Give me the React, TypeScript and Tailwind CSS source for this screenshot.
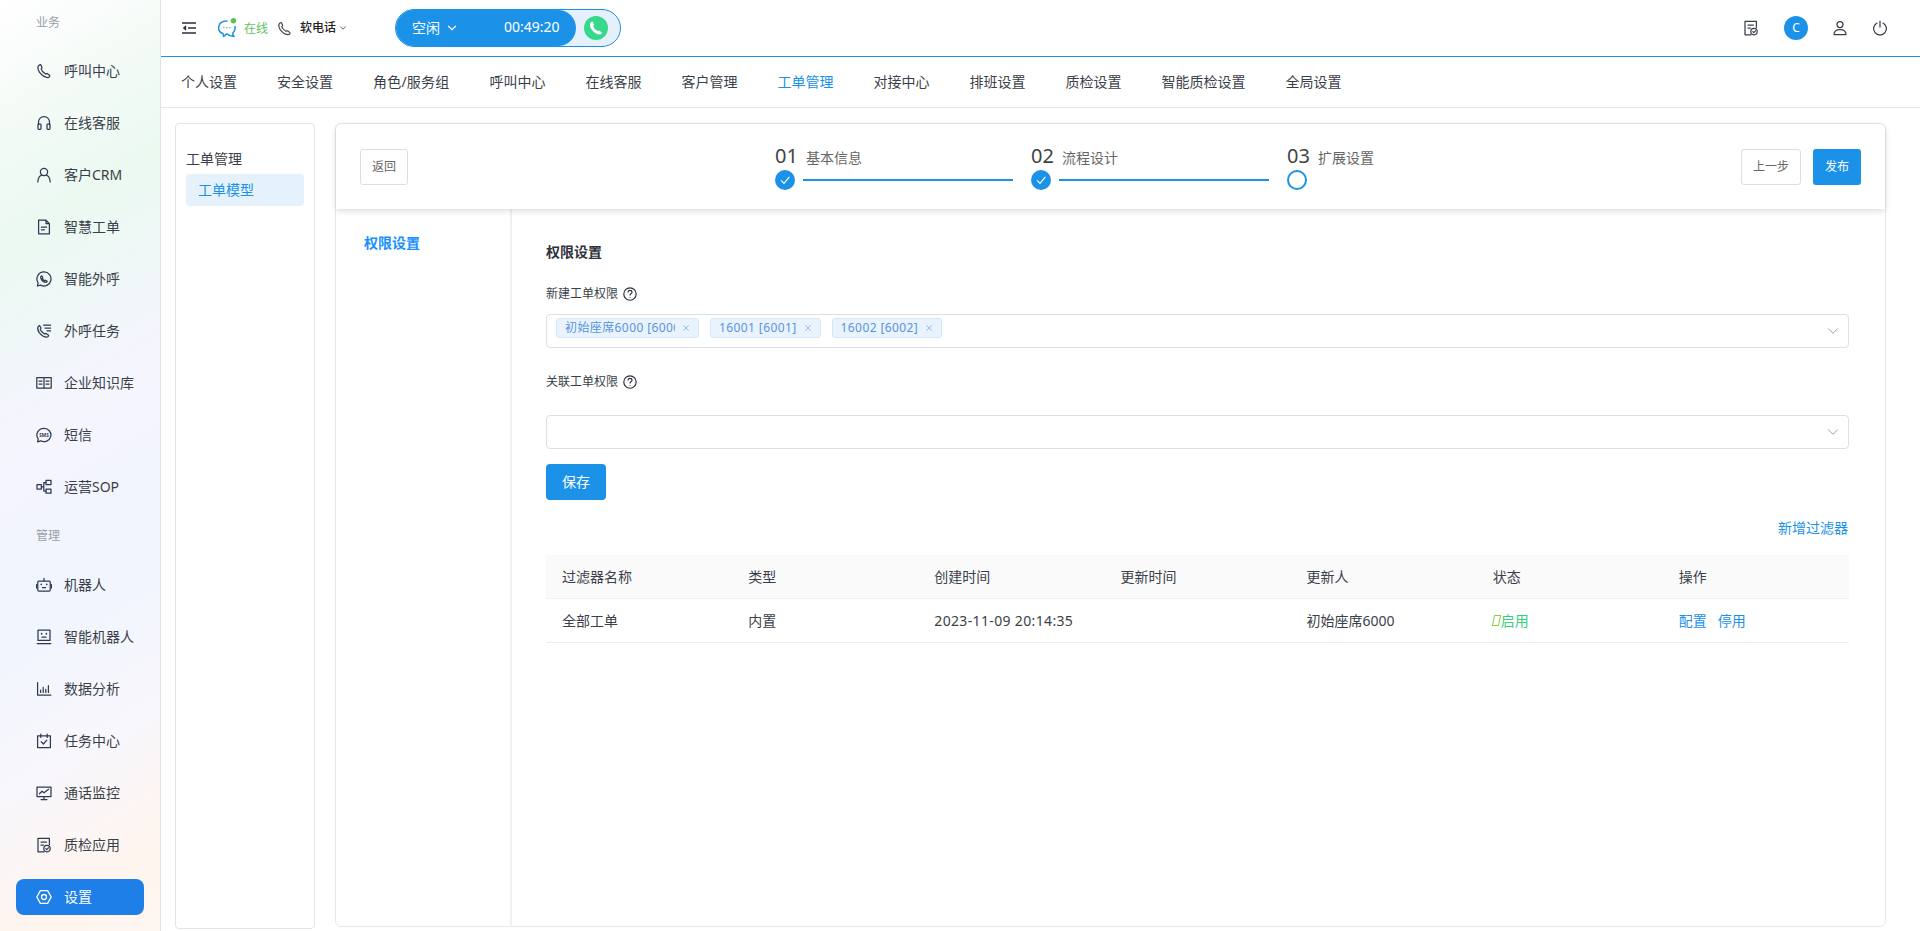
import { ChevronDown, X } from 'lucide-react'
import type { ReactNode } from 'react'

function Ico({ children, className = 'w-4 h-4' }: { children: ReactNode; className?: string }) {
  return (
    <svg viewBox="0 0 16 16" fill="none" stroke="currentColor" strokeWidth="1.25" strokeLinecap="round" strokeLinejoin="round" className={className}>
      {children}
    </svg>
  )
}

const phonePath = 'M4.6 1.6 L6 4.6 Q5.9 5.3 5.1 5.9 Q5.6 8.4 9.6 11 Q10.4 10.4 11.1 10.4 L13.9 12.4 Q13.9 14.2 12 14.6 Q7.4 14.4 3.6 9.4 Q1.2 5.6 2.2 3.2 Q3 1.8 4.6 1.6 Z'

const menuIcons: Record<string, ReactNode> = {
  phone: <path d={phonePath} />,
  headset: (
    <>
      <path d="M2.5 9.5 V7 a5.5 5.5 0 0 1 11 0 V9.5" />
      <rect x="2" y="9" width="3" height="5.4" rx="0.8" />
      <rect x="11" y="9" width="3" height="5.4" rx="0.8" />
    </>
  ),
  user: (
    <>
      <circle cx="8" cy="5" r="3.6" />
      <path d="M1.8 15 Q2.2 9.2 5.6 8.2 M14.2 15 Q13.8 9.2 10.4 8.2" />
    </>
  ),
  doc: (
    <>
      <path d="M2.6 1.2 H10 L13.4 4.6 V14.8 H2.6 Z M10 1.2 V4.6 H13.4" />
      <path d="M5.4 8 H10.6 M5.4 10.8 H8.4" />
    </>
  ),
  whatsapp: (
    <>
      <path d="M8 1 a7 7 0 1 1 -3.4 13.1 L1.4 15 L2.2 12 A7 7 0 0 1 8 1 Z" />
      <path d="M5.8 4.8 L6.8 6.6 L6.2 7.4 Q7.2 9.2 8.8 9.8 L9.6 9.2 L11.2 10.2 Q10.8 11.4 9.6 11.4 Q5 10.4 4.6 6 Q4.8 5 5.8 4.8 Z" />
    </>
  ),
  task: (
    <>
      <path d="M3.6 2.6 L5 5 Q4.9 5.7 4.2 6.2 Q4.7 8.6 8.6 11 Q9.4 10.4 10 10.4 L12.6 12.2 Q12.6 13.8 10.8 14.2 Q6.6 14 3.2 9.6 Q1 6.2 2 4 Q2.6 2.8 3.6 2.6 Z" />
      <path d="M7.6 2.2 H14.6 M9 5 H14.6 M11 7.8 H14.6" />
    </>
  ),
  book: (
    <>
      <rect x="0.8" y="2.6" width="14.4" height="10.4" />
      <path d="M8 2.6 V13 M3 6 H6 M3 9 H6 M10 6 H13 M10 9 H13" />
    </>
  ),
  sms: (
    <>
      <path d="M8 1.4 a7 6.6 0 1 1 -3.4 12.4 L1.6 14.8 L2.2 11.8 A7 6.6 0 0 1 8 1.4 Z" />
      <text x="8" y="9.8" textAnchor="middle" fontSize="4.6" fontWeight="700" fill="currentColor" stroke="none">SMS</text>
    </>
  ),
  sop: (
    <>
      <rect x="1" y="5.6" width="4.4" height="4.4" />
      <rect x="10" y="1.4" width="5" height="4.2" />
      <rect x="10" y="10" width="5" height="4.2" />
      <path d="M5.4 7.8 H7.8 M7.8 3.6 V12 M7.8 3.6 H10 M7.8 12 H10" />
    </>
  ),
  robot: (
    <>
      <rect x="1.8" y="4" width="12.4" height="10" rx="1" />
      <path d="M8 4 V1.4 M0.6 7.4 V11 M15.4 7.4 V11 M6.4 10.6 H9.6" />
      <path d="M5.2 7.4 V7.6 M10.8 7.4 V7.6" strokeWidth="1.6" />
    </>
  ),
  face: (
    <>
      <path d="M2 1.2 H14 V11.4 H2 Z M1.2 14.6 H14.8" />
      <path d="M5.6 4.6 V5 M10.4 4.6 V5" strokeWidth="1.6" />
      <path d="M6 8.2 H10" />
    </>
  ),
  chart: <path d="M1.6 1.6 V14.2 H14.8 M4.6 11.4 V9 M7.2 11.4 V6.4 M9.8 11.4 V8.4 M12.4 11.4 V4.6" />,
  calendar: (
    <>
      <path d="M1.6 2.8 H14.4 V14.6 H1.6 Z M4.8 1 V4.4 M11.2 1 V4.4" />
      <path d="M5.2 8.8 L7.4 11 L10.8 7.2" />
    </>
  ),
  monitor: (
    <>
      <path d="M1 2 H15 V11.6 H1 Z M5 14.6 H11 M8 11.6 V14.6" />
      <path d="M3.4 8.8 L6 6.2 L8 7.8 L12.6 4.2" />
    </>
  ),
  check: (
    <>
      <path d="M8 14.8 H2 V1.4 H13.4 V7.4 M5 5 H10.4 M5 8 H7.4" />
      <circle cx="11" cy="11.6" r="3.2" />
      <path d="M9.8 11.6 L10.8 12.6 L12.4 10.8" />
    </>
  ),
  setting: (
    <>
      <path d="M4.4 1.6 H11.6 L15.2 8 L11.6 14.4 H4.4 L0.8 8 Z" strokeWidth="1.3" />
      <circle cx="8" cy="8" r="2.5" strokeWidth="1.3" />
    </>
  ),
}

const group1 = [
  ['phone', '呼叫中心'],
  ['headset', '在线客服'],
  ['user', '客户CRM'],
  ['doc', '智慧工单'],
  ['whatsapp', '智能外呼'],
  ['task', '外呼任务'],
  ['book', '企业知识库'],
  ['sms', '短信'],
  ['sop', '运营SOP'],
]

const group2 = [
  ['robot', '机器人'],
  ['face', '智能机器人'],
  ['chart', '数据分析'],
  ['calendar', '任务中心'],
  ['monitor', '通话监控'],
  ['check', '质检应用'],
  ['setting', '设置'],
]

const tabs = ['个人设置', '安全设置', '角色/服务组', '呼叫中心', '在线客服', '客户管理', '工单管理', '对接中心', '排班设置', '质检设置', '智能质检设置', '全局设置']

const columns = ['过滤器名称', '类型', '创建时间', '更新时间', '更新人', '状态', '操作']

function MenuItem({ icon, label }: { icon: string; label: string }) {
  if (label === '设置') {
    return (
      <div className="h-[52px] px-4 flex items-center">
        <div className="w-full h-9 pl-5 flex items-center gap-3 rounded-lg bg-[#1f7fe8] text-white">
          <Ico>{menuIcons[icon]}</Ico>
          <span className="text-sm">{label}</span>
        </div>
      </div>
    )
  }
  return (
    <div className="h-[52px] pl-9 flex items-center gap-3 text-[#3a3f4a]">
      <Ico className="w-4 h-4 text-[#2f3a52]">{menuIcons[icon]}</Ico>
      <span className="text-sm">{label}</span>
    </div>
  )
}

function Sidebar() {
  return (
    <aside className="w-[161px] shrink-0 border-r border-[#dde2ee] bg-[linear-gradient(150deg,#ffffff_0%,#f6fbf8_10%,#ebf9f1_24%,#f5f5fe_44%,#f1f5fe_62%,#f8f7fc_78%,#fff5ef_92%,#fff7f2_100%)]">
      <div className="h-[45px] pl-9 flex items-center text-xs text-[#9a9fa8]">业务</div>
      {group1.map(([icon, label]) => (
        <MenuItem key={label} icon={icon} label={label} />
      ))}
      <div className="h-[46px] pl-9 flex items-center text-xs text-[#9a9fa8]">管理</div>
      {group2.map(([icon, label]) => (
        <MenuItem key={label} icon={icon} label={label} />
      ))}
    </aside>
  )
}

function TopBar() {
  return (
    <div className="h-[57px] shrink-0 border-b border-[#1b92e8] flex items-center">
      <svg viewBox="0 0 14 12" fill="none" stroke="#2a3040" strokeWidth="1.5" className="ml-[21px] w-[14px] h-3">
        <path d="M0 1 H14 M6 6 H14 M0 11 H14" />
        <path d="M4 3.6 L1 6 L4 8.4 Z" fill="#2a3040" strokeWidth="0.4" />
      </svg>
      <svg viewBox="0 0 20 20" fill="none" className="ml-[21px] w-5 h-5">
        <path d="M10 3 Q2 3 1.6 9.6 Q1.6 14.6 6 15.6 L6.6 18.4 L9.8 15.8 Q12.4 18.4 17 18.6 Q15.4 16.6 15.8 15 Q18.6 12.6 18 8.4" stroke="#1b92e8" strokeWidth="1.5" strokeLinecap="round" strokeLinejoin="round" />
        <path d="M6.6 9.6 H7 M9.6 9.6 H10 M12.6 9.6 H13" stroke="#7fa6c9" strokeWidth="1.4" strokeLinecap="round" />
        <circle cx="16.4" cy="2.8" r="2.7" fill="#5cc24a" />
      </svg>
      <span className="ml-[7px] mt-[2px] text-xs text-[#62c25a]">在线</span>
      <Ico className="ml-[9px] w-[15px] h-[15px] text-[#444]">{menuIcons.phone}</Ico>
      <span className="ml-[8px] text-xs font-medium text-[#222]">软电话</span>
      <ChevronDown className="ml-[2px] w-[10px] h-[10px] text-[#444]" strokeWidth={2} />
      <div className="ml-[47px] w-[226px] h-[38px] rounded-full border border-[#1b92e8] bg-[#e4f1fc] flex items-center">
        <div className="w-[180px] h-full rounded-full bg-[#1b92e8] text-white flex items-center text-sm">
          <span className="ml-4">空闲</span>
          <ChevronDown className="ml-[5px] w-[14px] h-[14px]" strokeWidth={2} />
          <span className="ml-[45px] mb-[2px]">00:49:20</span>
        </div>
        <div className="ml-[8px] w-6 h-6 rounded-full bg-[#36d88a] flex items-center justify-center">
          <svg viewBox="0 0 16 16" className="w-4 h-4" fill="#fff">
            <path d={phonePath} />
          </svg>
        </div>
      </div>
      <div className="ml-auto flex items-center text-[#3a3f4a]">
        <Ico className="w-4 h-4">{menuIcons.check}</Ico>
        <div className="ml-[25px] w-6 h-6 rounded-full bg-[#1b92e8] text-white text-xs flex items-center justify-center">C</div>
        <Ico className="ml-[24px] w-4 h-4">
          <circle cx="8" cy="4.6" r="3" />
          <path d="M2 14.6 Q2 9.6 8 9.6 Q14 9.6 14 14.6 Z" />
        </Ico>
        <Ico className="ml-[24px] mr-[32px] w-4 h-4">
          <path d="M5 3 A6.4 6.4 0 1 0 11 3 M8 1 V7" />
        </Ico>
      </div>
    </div>
  )
}

function Step({ num, label, done, line }: { num: string; label: string; done: boolean; line: boolean }) {
  return (
    <div className="w-[256px]">
      <div className="h-6 flex items-center">
        <span className="text-xl text-[#444]">{num}</span>
        <span className="ml-2 mt-[3px] text-sm text-[#666]">{label}</span>
      </div>
      <div className="mt-[1px] h-[22px] flex items-center">
        {done ? (
          <div className="w-5 h-5 rounded-full bg-[#1b92e8] flex items-center justify-center">
            <svg viewBox="0 0 12 12" className="w-3 h-3" fill="none" stroke="#fff" strokeWidth="1.1">
              <path d="M2 6.4 L5 9.4 L10.4 2.8" />
            </svg>
          </div>
        ) : (
          <div className="w-5 h-5 rounded-full border-2 border-[#1b92e8]" />
        )}
        {line && <div className="ml-2 w-[210px] h-[2px] bg-[#1b92e8]" />}
      </div>
    </div>
  )
}

function Help() {
  return (
    <svg viewBox="0 0 14 14" fill="none" stroke="#2a2f3a" strokeWidth="1.15" className="ml-[5px] w-[14px] h-[14px]">
      <circle cx="7" cy="7" r="6.2" />
      <path d="M5 5.4 Q5 3.4 7 3.4 Q9 3.4 9 5.2 Q9 6.2 7.6 7 Q7 7.4 7 8.6" />
      <path d="M7 10 V10.8" />
    </svg>
  )
}

function Tag({ text, clip }: { text: string; clip?: boolean }) {
  return (
    <div className="h-5 pl-2 pr-[7px] mr-[11px] rounded-[3px] border border-[#d6e8fa] bg-[#e8f3fd] flex items-center text-xs text-[#5a93dc]">
      <span className={clip ? 'w-[110px] overflow-hidden whitespace-nowrap tracking-[0.4px]' : 'whitespace-nowrap tracking-[0.4px]'}>{text}</span>
      <X className="ml-[6px] w-[10px] h-[10px] text-[#6a9fe0]" strokeWidth={1.5} />
    </div>
  )
}

export default function App() {
  return (
    <div className="h-screen overflow-hidden flex bg-white [font-family:'Noto_Sans','Noto_Sans_CJK_SC',sans-serif]">
      <Sidebar />
      <div className="flex-1 min-w-0 flex flex-col">
        <TopBar />
        <div className="h-[51px] shrink-0 border-b border-[#e4e4e4] pl-5 flex items-center gap-10 text-sm text-[#3a3f4a]">
          {tabs.map((t) => (
            <span key={t} className={t === '工单管理' ? 'text-[#1b92e8]' : t === '角色/服务组' ? 'tracking-[0.2px]' : ''}>{t}</span>
          ))}
        </div>

        <div className="flex-1 min-h-0 pt-[15px] pl-[14px] pr-[34px] pb-[2px] flex items-start">
          <div className="w-[140px] h-[806px] shrink-0 rounded border border-[#e4e4e4] px-[10px] pt-[25px]">
            <div className="text-sm leading-5 text-[#3a3f4a]">工单管理</div>
            <div className="mt-[5px] h-8 pl-3 rounded bg-[#e5f2fc] flex items-center text-sm text-[#1b92e8]">工单模型</div>
          </div>

          <div className="ml-5 flex-1 h-[804px] rounded-md border border-[#e8e8e8] flex flex-col">
            <div className="relative z-10 h-[85px] shrink-0 px-6 rounded-t-md bg-white shadow-[0_2px_6px_rgba(0,0,0,0.14)] flex items-center">
              <button className="w-12 h-9 rounded-[3px] border border-[#dedede] text-xs text-[#666]">返回</button>
              <div className="ml-[367px] mt-[2px] flex">
                <Step num="01" label="基本信息" done line />
                <Step num="02" label="流程设计" done line />
                <Step num="03" label="扩展设置" done={false} line={false} />
              </div>
              <div className="ml-auto flex gap-3">
                <button className="w-[60px] h-9 rounded-[3px] border border-[#dedede] text-xs text-[#666]">上一步</button>
                <button className="w-12 h-9 rounded-[3px] bg-[#1b92e8] text-xs text-white">发布</button>
              </div>
            </div>

            <div className="flex-1 min-h-0 flex">
              <div className="w-[176px] shrink-0 border-r-2 border-[#eef0f5] pt-[24px] pl-7">
                <div className="text-sm leading-5 font-semibold text-[#1890ff]">权限设置</div>
              </div>

              <div className="flex-1 min-w-0 pl-[34px] pr-9 pt-[33px]">
                <div className="text-sm leading-5 font-semibold text-[#2e323a]">权限设置</div>

                <div className="mt-[22px] h-5 flex items-center text-xs text-[#3a3f4a]">
                  新建工单权限
                  <Help />
                </div>
                <div className="mt-[10px] h-[34px] pl-[9px] pr-[6px] pt-[3px] rounded border border-[#dcdfe6] flex items-start">
                  <Tag text="初始座席6000 [6000]" clip />
                  <Tag text="16001 [6001]" />
                  <Tag text="16002 [6002]" />
                  <ChevronDown className="ml-auto mt-[4px] w-[18px] h-[18px] text-[#8f949e]" strokeWidth={1.2} />
                </div>

                <div className="mt-6 h-5 flex items-center text-xs text-[#3a3f4a]">
                  关联工单权限
                  <Help />
                </div>
                <div className="mt-[23px] h-[34px] pr-[6px] rounded border border-[#dcdfe6] flex items-center">
                  <ChevronDown className="ml-auto w-[18px] h-[18px] text-[#8f949e]" strokeWidth={1.2} />
                </div>

                <button className="mt-[15px] block w-[60px] h-9 rounded bg-[#1b92e8] text-sm text-white">保存</button>

                <div className="mt-[18px] pr-[1px] text-right text-sm leading-5 text-[#1b92e8]">新增过滤器</div>

                <div className="mt-[17px] h-11 grid grid-cols-7 items-center bg-[#fafafa] border-b border-[#f0f0f5] text-sm text-[#3a3f4a]">
                  {columns.map((c) => (
                    <div key={c} className="pl-4">{c}</div>
                  ))}
                </div>
                <div className="h-11 grid grid-cols-7 items-center border-b border-[#ebebf2] text-sm text-[#3a3f4a]">
                  <div className="pl-4">全部工单</div>
                  <div className="pl-4">内置</div>
                  <div className="pl-4 tracking-[0.35px]">2023-11-09 20:14:35</div>
                  <div className="pl-4"></div>
                  <div className="pl-4">初始座席6000</div>
                  <div className="pl-4 flex items-center text-[#35cf7f]">
                    <span className="w-[7px] h-[11px] mr-[1px] border border-[#8ad03a] -skew-x-12"></span>
                    启用
                  </div>
                  <div className="pl-4 text-[#1b92e8]">
                    <span>配置</span>
                    <span className="ml-[11px]">停用</span>
                  </div>
                </div>
              </div>
            </div>
          </div>
        </div>
      </div>
    </div>
  )
}
